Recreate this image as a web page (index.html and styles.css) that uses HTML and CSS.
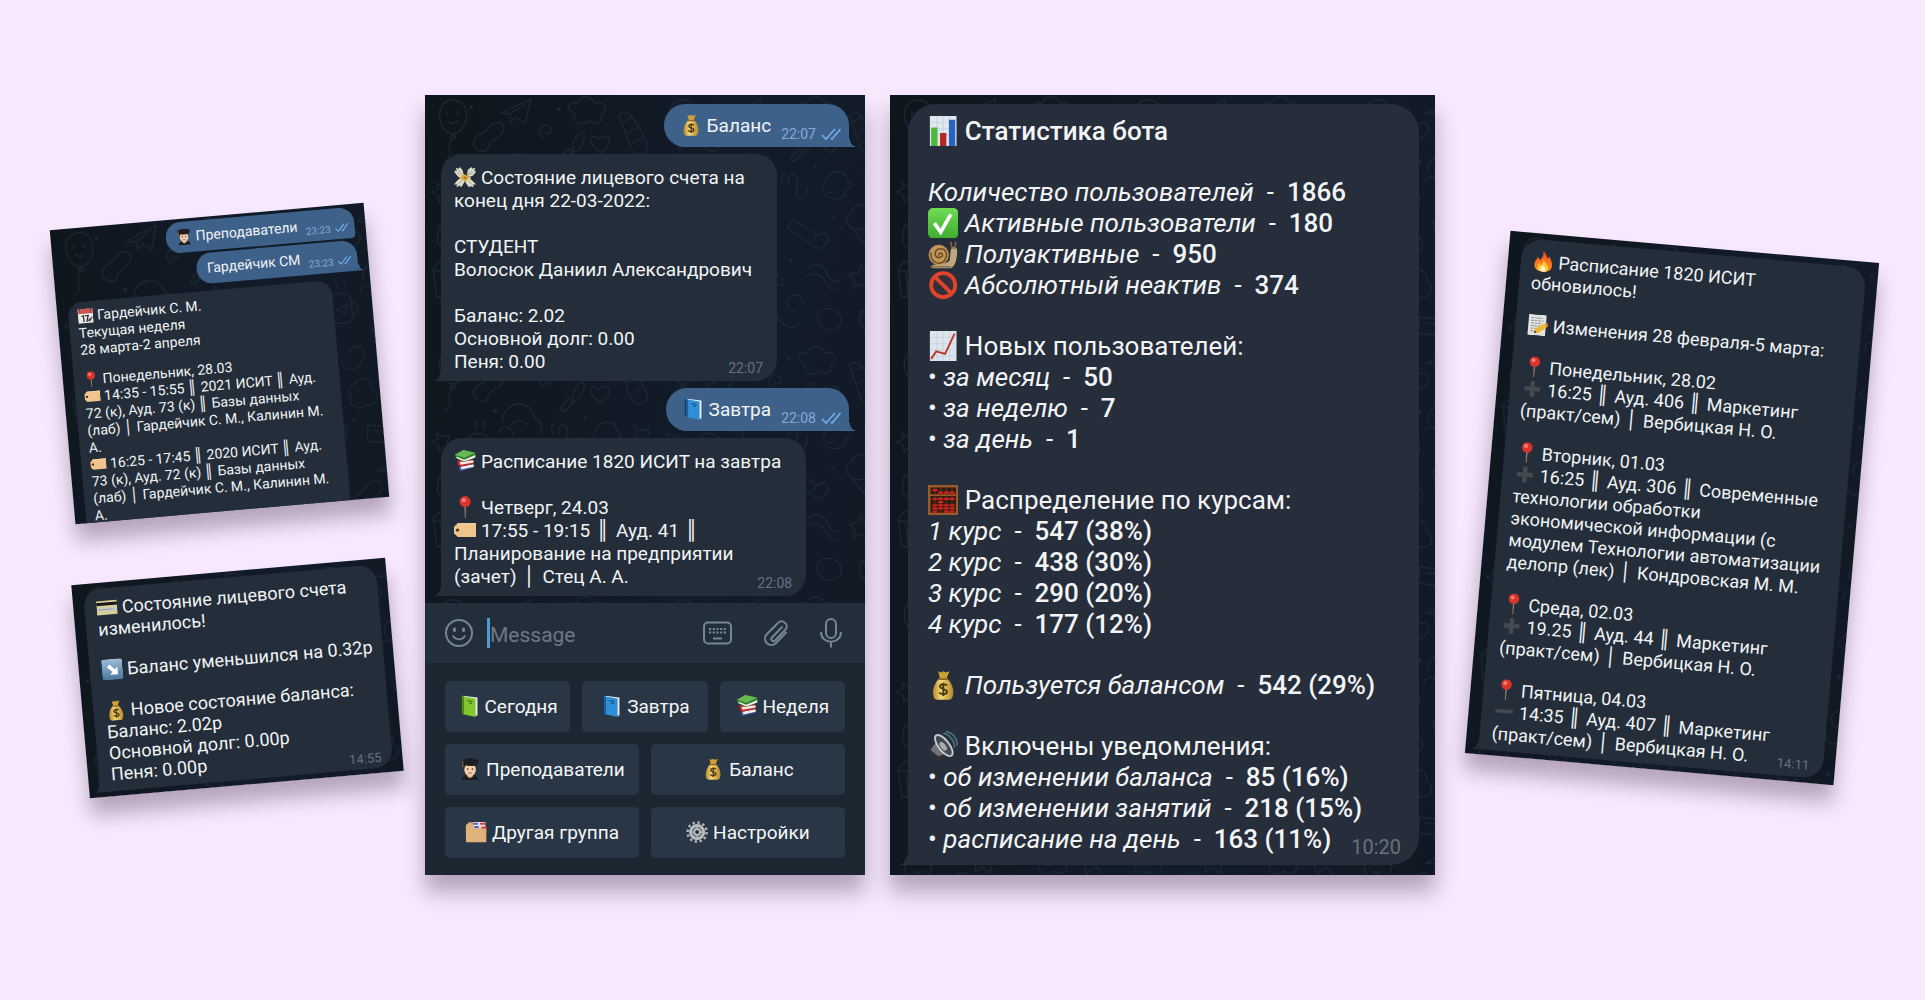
FILE: index.html
```html
<!DOCTYPE html>
<html lang="ru">
<head>
<meta charset="utf-8">
<meta name="viewport" content="width=device-width, initial-scale=1">
<title>Бот расписания</title>
<link rel="stylesheet" href="styles.css">
</head>
<body>
<svg class="defs" aria-hidden="true">
  <defs>
    <linearGradient id="g-gold" x1="0" x2="1"><stop offset="0" stop-color="#b98a26"/><stop offset=".4" stop-color="#f3d878"/><stop offset="1" stop-color="#b5852a"/></linearGradient>
    <linearGradient id="g-green" x1="0" y1="0" x2="0" y2="1"><stop offset="0" stop-color="#6fdc55"/><stop offset="1" stop-color="#3fae2c"/></linearGradient>
    <linearGradient id="g-blue" x1="0" y1="0" x2="0" y2="1"><stop offset="0" stop-color="#9cbcd8"/><stop offset="1" stop-color="#4a779f"/></linearGradient>
    <linearGradient id="g-fire" x1="0" y1="0" x2="0" y2="1"><stop offset="0" stop-color="#f0481e"/><stop offset="1" stop-color="#ff9a1f"/></linearGradient>
    <pattern id="doodle" width="230" height="250" patternUnits="userSpaceOnUse">
      <g fill="none" stroke="#1b2733" stroke-width="1.3" stroke-linecap="round" stroke-linejoin="round">
        <path d="M28 5c-20 0-16 32 0 34 16-2 20-34 0-34zM28 39l-3 4h6zM28 43c-10 10 4 14-8 24M22 17v3M33 17v3M23 26q5 5 9 0"/>
        <path d="M76 18l30-14-6 24-9-6-5 5-1-8zM85 19l15-10"/>
        <path d="M150 18c-10-2-8-12 2-10 3-8 14-8 18 0 10-2 14 8 6 12 4 8-8 10-12 6-6 6-18 2-14-8z"/>
        <path d="M194 20c8-8 14 0 28 28 4 10-10 16-16 6zM197 28l10-6M202 38l12-6M207 48l12-6"/>
        <path d="M66 30c14-8 18 8 4 14-10 4-4 14-14 12-12-2-8-16 2-18z"/>
        <path d="M120 42a6 6 0 1 1 6-6 3 3 0 0 1-6 0"/>
        <path d="M148 48c8-16 16-14 8 4l-8 6zM148 58c-4 2-6 10-12 8 0-8 6-10 8-12z"/>
        <path d="M174 44c-8-8-14 4 2 14 14-10 8-22-2-14z"/>
        <path d="M78 76a16 16 0 0 1 32-2 8 8 0 0 1 4 14M84 84a10 10 0 0 1 18-4M74 88c4-10 14-6 14 4"/>
        <path d="M12 88l6 4 7-2-3 7 4 6-7-1-5 5-1-7-7-3 7-3z"/>
        <path d="M44 94c0-8 20-8 20 2v18c0 6-20 6-20 0zM64 98c8 0 8 12 0 12M50 84q4-4 0-8M58 84q4-4 0-8M48 104l12-5-3 11-4-4z"/>
        <path d="M134 90c-4-14 12-14 8 2s12 16 10 0M130 78q-6 4-2 10"/>
        <path d="M172 82c8-8 20-6 20 4 6 0 4 8-2 8v6c-10 8-24 2-22-8zM184 88v1M170 96q6 4 10 0"/>
        <path d="M212 92a7 8 0 1 0 10 0c4-4 2-8-5-7-7-1-9 3-5 7zM209 80l1 3M224 80l-1 3"/>
        <path d="M14 132c16-14 28-4 20 14-4 10-18 10-22 0zM20 130l3-9 5 8M18 140v1M24 143v1M29 137v1"/>
        <path d="M82 126h34l-14 36c-2 4-6 4-8 0zM86 134l26 4M88 144l18 3M90 124c0-10 18-10 20 0"/>
        <path d="M138 124l24 16-6 9-24-16zM162 140l8-2 4 7-8 9-8-3M176 126l4-5M182 134l7-2"/>
        <path d="M196 118a12 12 0 1 1 20 12l-6 20-14-18c-6-4-6-12 0-14zM196 132c6 4 12 4 20-2"/>
        <path d="M58 148c8-14 22 0 10 10-2 12-22 8-18-4M58 152v1"/>
        <path d="M8 174c8-12 20-12 28 0l-4 28H12zM16 178l2 24M28 178l-2 24M8 176h28"/>
        <path d="M60 180c6-10 20-4 16 6 10 4 6 18-6 16-10 6-20-4-14-12-4-4 0-10 4-10z"/>
        <path d="M100 190a14 14 0 0 1 28 0zM114 190v18q3 6 6 0M106 190q2-8 8-14 6 6 8 14"/>
        <path d="M152 174q14-10 20 4t14 6M150 182q14-8 20 4t12 8"/>
        <path d="M206 170l4 8 9 1-7 6 2 9-8-5-8 5 2-9-6-6 9-1z"/>
        <path d="M140 216a8 8 0 1 1 8-8M22 226c0-10 16-10 16 0s-16 10-16 0zM38 226l10-6v12z"/>
        <path d="M70 222l30 4-2 16-30-4zM76 228l16 2M112 228q8-10 16 0t16 0M164 216c14-8 28 4 20 16-14 8-26-2-20-16z"/>
        <path d="M206 216c12 0 18 8 14 20-10 2-18-6-14-20zM206 216q8 6 14 20"/>
      </g>
      <g fill="#1b2733"><circle cx="46" cy="12" r="2"/><circle cx="134" cy="14" r="2"/><circle cx="70" cy="66" r="2"/><circle cx="160" cy="72" r="2"/><circle cx="104" cy="108" r="2"/><circle cx="42" cy="160" r="2"/><circle cx="136" cy="166" r="2"/><circle cx="220" cy="204" r="2"/><circle cx="56" cy="216" r="2"/></g>
    </pattern>
  </defs>

  <symbol id="bag" viewBox="0 0 24 24"><path d="M8 1l2 1 2-1 2 1 3-1-2.500 6h-5z" fill="#d0a036"/><path d="M9 6.500h6c3 3 5 7 5 11 0 4-1.500 5.500-3 6H7c-2-.5-3-2-3-6 0-4 2-8 5-11z" fill="url(#g-gold)"/><path d="M8.500 7.200h7" stroke="#8d641a" stroke-width="1.400"/><path d="M15 12.200c-1-1.400-5.500-1.500-5.500.9 0 2.500 5.500 1.400 5.500 4 0 2.400-4.800 2.400-6 .6M12.100 10v10.500" fill="none" stroke="#4b3a12" stroke-width="1.500"/></symbol>
  <symbol id="wings" viewBox="0 0 24 24"><path d="M11 11L9 4 6 1 5 3 2 2l1 3-3 0 2 4 3 3 5 2zM14 10l1-6 4-3 1 2 3-1-1 3 2 1-3 4-4 2zM9 12l-5 3-4 5 3 0 0 3 3-2 2 2 4-7zM14 13l5 2 5 5-3 0 0 3-3-1-2 1-4-6z" fill="#dcdccb"/><path d="M4 4l6 6M3 7l6 4M20 4l-5 5M21 7l-6 3M3 21l6-6M21 21l-6-5" stroke="#92958a" stroke-width=".8"/><path d="M6 7l12.500 6-2 5L4.500 12z" fill="#d3d1a9"/><path d="M10 8.500l6 3-3 5.500-6-3z" fill="#e4ad35"/><path d="M10.500 12l3 1.500" stroke="#79591c" stroke-width="1.300"/></symbol>
  <symbol id="book-blue" viewBox="0 0 24 24"><path d="M3 1.500l3-1v20l-3-1z" fill="#123c60"/><path d="M5 .8l16 2v19.500L5 20z" fill="#eceff2"/><path d="M4.500 1.300l14.500 2.500v20L4.500 20.500z" fill="#2f8ed6"/><path d="M4.500 1.300v19.200l2 .5V1.600z" fill="#1c5c93"/><path d="M10 6l6 1M12 8.500l3 .5" stroke="#155085" stroke-width="1.200"/></symbol>
  <symbol id="book-green" viewBox="0 0 24 24"><path d="M3 1.500l3-1v20l-3-1z" fill="#2e4f0d"/><path d="M5 .8l16 2v19.500L5 20z" fill="#eceff2"/><path d="M4.500 1.300l14.500 2.500v20L4.500 20.500z" fill="#83c62f"/><path d="M4.500 1.300v19.200l2 .5V1.600z" fill="#4d8118"/><path d="M10 6l6 1M12 8.500l3 .5" stroke="#42700f" stroke-width="1.200"/></symbol>
  <symbol id="books" viewBox="0 0 24 24"><path d="M6 17l14-2 2 4-15 4-2-2z" fill="#3b4c98"/><path d="M7 18l14-2.500.5 2.500L8 21z" fill="#eee"/><path d="M4 11l16-1 1 5-14 3-3-2z" fill="#c92828"/><path d="M6 13l15-2 .3 2.500L7 16z" fill="#f1e9e9"/><path d="M1 5l9-5 13 3v5l-12 5L2 9z" fill="#2f7e28"/><path d="M1 5l9-5 13 3-12 5.500z" fill="#67b951"/><path d="M2.500 7L11 10.500 23 5.500V8l-12 4.500L3 9z" fill="#ececec"/></symbol>
  <symbol id="pin" viewBox="0 0 24 24"><path d="M11.200 10h1.700l-.3 14h-.9z" fill="#9b8072"/><circle cx="12" cy="6" r="6" fill="#d9342c"/><circle cx="10.500" cy="4.500" r="2.300" fill="#f47d72"/></symbol>
  <symbol id="tag" viewBox="0 0 24 24"><path d="M4 4.500h20v15H4l-4-4v-7z" fill="#efc48d"/><path d="M4 4.500h20v1.200H4z" fill="#f8dcae"/><circle cx="3.800" cy="12" r="1.800" fill="#4d3625"/></symbol>
  <symbol id="student" viewBox="0 0 24 24"><path d="M3 24c1-5 5-6 9-6s8 1 9 6z" fill="#1c1c20"/><path d="M9 17h6v3l-3 2-3-2z" fill="#dfb18c"/><ellipse cx="12" cy="12.500" rx="6.300" ry="7" fill="#f3cda8"/><path d="M5 12c-1-6 2-8 7-8s8 2 7 8l-1-4c-3 1-8 1-11-1z" fill="#38251a"/><path d="M3 2l9-2 9 2v4l-4 2H7L3 6z" fill="#1e1e22"/><path d="M4 3v7" stroke="#98702d" stroke-width="1"/><circle cx="9.500" cy="12" r=".9" fill="#333"/><circle cx="14.500" cy="12" r=".9" fill="#333"/><path d="M10 16q2 1.200 4 0" stroke="#a25b4c" fill="none"/></symbol>
  <symbol id="dividers" viewBox="0 0 24 24"><path d="M1 4l4-3h5l1 3 11 1 1 2v5H1z" fill="#b98a56"/><path d="M9 1h13v7H9z" fill="#e8e4ea"/><path d="M9 2h5v2H9z" fill="#5268c4"/><path d="M16 2h6v2h-6z" fill="#d33d36"/><path d="M1 5l4-3.500L9 4v4l14 1v14H1z" fill="#e0b27b"/><path d="M10 5.500h5v2h-5z" fill="#5268c4"/><path d="M17 6h6v2h-5z" fill="#d33d36"/></symbol>
  <symbol id="gear" viewBox="0 0 24 24"><circle cx="12" cy="12" r="10.300" fill="none" stroke="#aeb2b5" stroke-width="2.800" stroke-dasharray="2.600 2.790"/><circle cx="12" cy="12" r="7.200" fill="#6d7275" stroke="#b9bdc0" stroke-width="3"/><circle cx="12" cy="12" r="3" fill="#2a3746" stroke="#c9cccf" stroke-width="1.600"/><path d="M12 5v4M12 15v4M5 12h4M15 12h4" stroke="#b9bdc0" stroke-width="1.300"/></symbol>
  <symbol id="bars" viewBox="0 0 24 24"><path d="M1.500 0h21v24h-21z" fill="#dde8f0"/><path d="M1.500 5h21M1.500 10h21M1.500 15h21M7 0v24M12 0v24M17 0v24" stroke="#bccbd6" stroke-width=".5"/><path d="M2.500 9h5v15h-5z" fill="#4fb83c"/><path d="M9.500 13.500h5V24h-5z" fill="#b52620"/><path d="M16.500 3h5v21h-5z" fill="#2a62c4"/></symbol>
  <symbol id="check" viewBox="0 0 24 24"><rect width="24" height="24" rx="4" fill="url(#g-green)"/><path d="M5 12l5 7 8-14" fill="none" stroke="#fff" stroke-width="3"/></symbol>
  <symbol id="snail" viewBox="0 0 24 24"><path d="M2 22c4-4 12-1 15-5l1-9c1-3 5-2 5 1 0 6-1 12-5 14H4z" fill="#bda87c"/><path d="M19 8l-1-6M21 8l1-6" stroke="#7a6440" stroke-width="1.300"/><circle cx="8.500" cy="12.500" r="8" fill="#c3965a"/><path d="M8.500 13a1.500 1.500 0 1 1 2 1c-3 2-6-1-4.500-4s6.500-3 8 0 0 8-4 9-9-3-7.500-8.500" fill="none" stroke="#704a22" stroke-width="1.200"/><path d="M2 22h16" stroke="#7c6440"/></symbol>
  <symbol id="ban" viewBox="0 0 24 24"><circle cx="12" cy="12" r="9.500" fill="#343039" stroke="#e0452c" stroke-width="3"/><path d="M5.500 5.500l13 13" stroke="#e0452c" stroke-width="3"/></symbol>
  <symbol id="trend" viewBox="0 0 24 24"><path d="M1.500 0h21v24h-21z" fill="#dde5ec"/><path d="M1.500 5h21M1.500 10h21M1.500 15h21M1.500 20h21M7 0v24M12 0v24M17 0v24" stroke="#bccbd6" stroke-width=".5"/><path d="M2.500 22l4-6 7 2 7.500-16" fill="none" stroke="#c3332b" stroke-width="1.500"/></symbol>
  <symbol id="abacus" viewBox="0 0 24 24"><path d="M1 1h22v22H1z" fill="#2d1b14" stroke="#9a5a2a" stroke-width="2"/><path d="M1 8h22" stroke="#9a5a2a" stroke-width="1.300"/><path d="M5.500 2v20M10 2v20M14.500 2v20M19 2v20" stroke="#7d3a1c" stroke-width=".7"/><path d="M3.500 4h4M8 6h4M12.500 6h4M17 6h4M3.500 11h4M3.500 16h4M3.500 18.500h4M3.500 21h4M8 11h4M8 13.500h4M8 16h4M8 18.500h4M12.500 11h4M12.500 16h4M12.500 18.500h4M12.500 21h4M17 11h4M17 16h4M17 18.500h4M17 21h4" stroke="#cf2320" stroke-width="1.700"/></symbol>
  <symbol id="speaker" viewBox="0 0 24 24"><path d="M1 15l5-5 8 9-4 5-7-2z" fill="#2e2f33"/><path d="M2 15l6-9 9 11-9 3z" fill="#6f7277"/><ellipse cx="12.500" cy="11.500" rx="4.200" ry="10" transform="rotate(-38 12.500 11.500)" fill="#44474d" stroke="#c4c7cb" stroke-width="1.500"/><ellipse cx="12" cy="12" rx="2" ry="4" transform="rotate(-38 12 12)" fill="#a8abb0"/><path d="M12 2c4 0 9 5 9 11M14 .5c5 0 9 5 9 11" fill="none" stroke="#527787" stroke-width="1.200"/></symbol>
  <symbol id="calendar" viewBox="0 0 24 24"><path d="M1 2h22v21H1z" fill="#ecebea"/><path d="M1 2h22v7H1z" fill="#c65552"/><path d="M4 0v4M20 0v4" stroke="#66282a" stroke-width="1.500"/><path d="M6 13l3-1v9M11 12h5l-3 9" fill="none" stroke="#2b2b2b" stroke-width="1.800"/><path d="M14 21l4-4 0 3 4-6" fill="none" stroke="#444" stroke-width="1.600"/></symbol>
  <symbol id="card" viewBox="0 0 24 24"><rect y="4" width="24" height="16" rx="1" fill="#d6cf95"/><path d="M0 6h24v3.500H0z" fill="#17171a"/><path d="M1 12h22v4H1z" fill="#c7c9cb"/><path d="M3 14h17" stroke="#888b90" stroke-dasharray="3 1"/></symbol>
  <symbol id="arrow" viewBox="0 0 24 24"><rect width="24" height="24" rx="3" fill="url(#g-blue)"/><path d="M6 9l3-3 6 6 3-3v9H9l3-3z" fill="#fff"/></symbol>
  <symbol id="fire" viewBox="0 0 24 24"><path d="M11 0c2 3 5 5 5 9l2-3c2 3 4 6 4 10 0 5-4 8-10 8S2 21 2 16c0-4 3-6 3-9l3 4c2-3 4-6 3-11z" fill="url(#g-fire)"/><path d="M12 9c0 4 6 6 6 10 0 3-2 5-6 5s-6-2-6-5c0-2 1-4 2-5l1 3c2-2 3-5 3-8z" fill="#ffc636"/><path d="M12 16c1 2 3 3 3 5s-1 3-3 3-3-1-3-3 2-3 3-5z" fill="#fff3c4"/></symbol>
  <symbol id="memo" viewBox="0 0 24 24"><path d="M1 0h20v24H1z" fill="#e2e3e2"/><path d="M4 4h13M4 7h14M4 10h12M4 13h12M4 16h7M4 19h6" stroke="#929593" stroke-width="1.200" stroke-dasharray="3 1"/><path d="M8 21l1-5L20 9l3 4-10 8z" fill="#eab92f"/><path d="M20 9l2-1 2 4-1 1z" fill="#d9706c"/><path d="M8 21l1-3 2 3z" fill="#333"/></symbol>
  <symbol id="plus" viewBox="0 0 24 24"><path d="M9.500 3h5v6.500H21v5h-6.500V21h-5v-6.500H3v-5h6.500z" fill="#454a4e"/></symbol>
  <symbol id="minus" viewBox="0 0 24 24"><path d="M2 9.500h20v4H2z" fill="#454a4e"/></symbol>
  <symbol id="read" viewBox="0 0 20 12"><path d="M1 7l4 4L14 1M10 10l1 1 8.500-10" fill="none" stroke="#6cb0ee" stroke-width="1.700"/></symbol>
</svg>

<main class="board">
  <section class="stack">
    <article class="shot shot-teacher">
      <svg class="wallpaper" aria-hidden="true"><rect width="100%" height="100%" fill="url(#doodle)"/></svg>
      <div class="msg out plain"><svg class="em"><use href="#student"/></svg> Преподаватели<time>23:23</time><svg class="read"><use href="#read"/></svg></div>
      <div class="msg out"><span>Гардейчик СМ</span><time>23:23</time><svg class="read"><use href="#read"/></svg></div>
      <div class="msg in plain">
        <p><span><svg class="em"><use href="#calendar"/></svg> Гардейчик С. М.</span><span>Текущая неделя</span><span>28 марта-2 апреля</span></p>
        <p><span><svg class="em"><use href="#pin"/></svg> Понедельник, 28.03</span><span><svg class="em"><use href="#tag"/></svg> 14:35 - 15:55 <i class="bar">║</i> 2021 ИСИТ <i class="bar">║</i> Ауд.</span><span>72 (к), Ауд. 73 (к) <i class="bar">║</i> Базы данных</span><span>(лаб) <i class="bar">│</i> Гардейчик С. М., Калинин М.</span><span>А.</span><span><svg class="em"><use href="#tag"/></svg> 16:25 - 17:45 <i class="bar">║</i> 2020 ИСИТ <i class="bar">║</i> Ауд.</span><span>73 (к), Ауд. 72 (к) <i class="bar">║</i> Базы данных</span><span>(лаб) <i class="bar">│</i> Гардейчик С. М., Калинин М.</span><span>А.</span></p>
      </div>
    </article>

    <article class="shot shot-account">
      <svg class="wallpaper" aria-hidden="true"><rect width="100%" height="100%" fill="url(#doodle)"/></svg>
      <div class="msg in">
        <p><span><svg class="em"><use href="#card"/></svg> Состояние лицевого счета</span><span>изменилось!</span></p>
        <p><span><svg class="em"><use href="#arrow"/></svg> Баланс уменьшился на 0.32р</span></p>
        <p><span><svg class="em"><use href="#bag"/></svg> Новое состояние баланса:</span><span>Баланс: 2.02р</span><span>Основной долг: 0.00р</span><span>Пеня: 0.00р</span></p>
        <time>14:55</time>
      </div>
    </article>
  </section>

  <article class="shot shot-phone">
    <div class="chat">
      <svg class="wallpaper" aria-hidden="true"><rect width="100%" height="100%" fill="url(#doodle)"/></svg>
      <div class="msg out"><svg class="em"><use href="#bag"/></svg> Баланс<time>22:07</time><svg class="read"><use href="#read"/></svg></div>
      <div class="msg in">
        <p><span><svg class="em"><use href="#wings"/></svg> Состояние лицевого счета на</span><span>конец дня 22-03-2022:</span></p>
        <p><span>СТУДЕНТ</span><span>Волосюк Даниил Александрович</span></p>
        <p><span>Баланс: 2.02</span><span>Основной долг: 0.00</span><span>Пеня: 0.00</span></p>
        <time>22:07</time>
      </div>
      <div class="msg out"><svg class="em"><use href="#book-blue"/></svg> Завтра<time>22:08</time><svg class="read"><use href="#read"/></svg></div>
      <div class="msg in">
        <p><span><svg class="em"><use href="#books"/></svg> Расписание 1820 ИСИТ на завтра</span></p>
        <p><span><svg class="em"><use href="#pin"/></svg> Четверг, 24.03</span><span><svg class="em"><use href="#tag"/></svg> 17:55 - 19:15 <i class="bar">║</i> Ауд. 41 <i class="bar">║</i></span><span>Планирование на предприятии</span><span>(зачет) <i class="bar">│</i> Стец А. А.</span></p>
        <time>22:08</time>
      </div>
    </div>
    <form class="composer">
      <button type="button" class="tool" aria-label="Emoji"><svg width="28" height="28" viewBox="0 0 28 28"><circle cx="14" cy="14" r="13"/><path d="M8 16.500c2 5 10 5 12 0"/><path d="M9.500 10v1.500M18.500 10v1.500" stroke-width="3" stroke-linecap="round"/></svg></button>
      <input type="text" class="field" placeholder="Message" aria-label="Message">
      <button type="button" class="tool" aria-label="Keyboard"><svg width="29" height="28" viewBox="0 0 29 28"><rect x="1" y="3.500" width="27" height="21" rx="4"/><path d="M6 10h17M6 13.500h17" stroke-width="2.200" stroke-dasharray="2.200 1.500"/><path d="M10 19.500h9"/></svg></button>
      <button type="button" class="tool" aria-label="Attach"><svg width="24" height="28" viewBox="0 0 24 28"><path d="M18 8L8 18.500c-2 2 1 5 3 3L21.500 10.500c4-5-3-11-7.500-6.500L3 15c-6 6.500 3 15 9 9L22 13.500" stroke-linecap="round"/></svg></button>
      <button type="button" class="tool" aria-label="Voice"><svg width="22" height="30" viewBox="0 0 22 30"><rect x="6" y="1" width="10" height="19" rx="5"/><path d="M1 14c0 13 20 13 20 0M11 24v5.500"/></svg></button>
    </form>
    <div class="keys">
      <div class="keyrow"><button type="button"><svg class="em"><use href="#book-green"/></svg> Сегодня</button><button type="button"><svg class="em"><use href="#book-blue"/></svg> Завтра</button><button type="button"><svg class="em"><use href="#books"/></svg> Неделя</button></div>
      <div class="keyrow"><button type="button"><svg class="em"><use href="#student"/></svg> Преподаватели</button><button type="button"><svg class="em"><use href="#bag"/></svg> Баланс</button></div>
      <div class="keyrow"><button type="button"><svg class="em"><use href="#dividers"/></svg> Другая группа</button><button type="button"><svg class="em"><use href="#gear"/></svg> Настройки</button></div>
    </div>
  </article>

  <article class="shot shot-stats">
    <svg class="wallpaper" aria-hidden="true"><rect width="100%" height="100%" fill="url(#doodle)"/></svg>
    <div class="msg in">
      <p><span><svg class="em"><use href="#bars"/></svg> <b>Статистика бота</b></span></p>
      <p><span><em>Количество пользователей</em>  -  <b>1866</b></span><span><svg class="em"><use href="#check"/></svg> <em>Активные пользователи</em>  -  <b>180</b></span><span><svg class="em"><use href="#snail"/></svg> <em>Полуактивные</em>  -  <b>950</b></span><span><svg class="em"><use href="#ban"/></svg> <em>Абсолютный неактив</em>  -  <b>374</b></span></p>
      <p><span><svg class="em"><use href="#trend"/></svg> Новых пользователей:</span><span>• <em>за месяц</em>  -  <b>50</b></span><span>• <em>за неделю</em>  -  <b>7</b></span><span>• <em>за день</em>  -  <b>1</b></span></p>
      <p><span><svg class="em"><use href="#abacus"/></svg> Распределение по курсам:</span><span><em>1 курс</em>  -  <b>547 (38%)</b></span><span><em>2 курс</em>  -  <b>438 (30%)</b></span><span><em>3 курс</em>  -  <b>290 (20%)</b></span><span><em>4 курс</em>  -  <b>177 (12%)</b></span></p>
      <p><span><svg class="em"><use href="#bag"/></svg> <em>Пользуется балансом</em>  -  <b>542 (29%)</b></span></p>
      <p><span><svg class="em"><use href="#speaker"/></svg> Включены уведомления:</span><span>• <em>об изменении баланса</em>  -  <b>85 (16%)</b></span><span>• <em>об изменении занятий</em>  -  <b>218 (15%)</b></span><span>• <em>расписание на день</em>  -  <b>163 (11%)</b></span></p>
      <time>10:20</time>
    </div>
  </article>

  <article class="shot shot-update">
    <svg class="wallpaper" aria-hidden="true"><rect width="100%" height="100%" fill="url(#doodle)"/></svg>
    <div class="msg in">
      <p><span><svg class="em"><use href="#fire"/></svg> Расписание 1820 ИСИТ</span><span>обновилось!</span></p>
      <p><span><svg class="em"><use href="#memo"/></svg> Изменения 28 февраля-5 марта:</span></p>
      <p><span><svg class="em"><use href="#pin"/></svg> Понедельник, 28.02</span><span><svg class="em"><use href="#plus"/></svg> 16:25 <i class="bar">║</i> Ауд. 406 <i class="bar">║</i> Маркетинг</span><span>(практ/сем) <i class="bar">│</i> Вербицкая Н. О.</span></p>
      <p><span><svg class="em"><use href="#pin"/></svg> Вторник, 01.03</span><span><svg class="em"><use href="#plus"/></svg> 16:25 <i class="bar">║</i> Ауд. 306 <i class="bar">║</i> Современные</span><span>технологии обработки</span><span>экономической информации (с</span><span>модулем Технологии автоматизации</span><span>делопр (лек) <i class="bar">│</i> Кондровская М. М.</span></p>
      <p><span><svg class="em"><use href="#pin"/></svg> Среда, 02.03</span><span><svg class="em"><use href="#plus"/></svg> 19.25 <i class="bar">║</i> Ауд. 44 <i class="bar">║</i> Маркетинг</span><span>(практ/сем) <i class="bar">│</i> Вербицкая Н. О.</span></p>
      <p><span><svg class="em"><use href="#pin"/></svg> Пятница, 04.03</span><span><svg class="em"><use href="#minus"/></svg> 14:35 <i class="bar">║</i> Ауд. 407 <i class="bar">║</i> Маркетинг</span><span>(практ/сем) <i class="bar">│</i> Вербицкая Н. О.</span></p>
      <time>14:11</time>
    </div>
  </article>
</main>
</body>
</html>
```
FILE: styles.css
```css
* { box-sizing: border-box; }

body {
  margin: 0;
  background: #f7e8fe;
  color: #f2f4f6;
  font-family: Roboto, "Noto Sans", "DejaVu Sans", sans-serif;
}

.defs { position: absolute; width: 0; height: 0; }

.board {
  display: grid;
  grid-template-columns: minmax(0, 338fr) minmax(0, 440fr) minmax(0, 545fr) minmax(0, 397fr);
  column-gap: 25px;
  align-items: center;
  min-height: 100vh;
  padding: 0 68px 30px 62px;
}

/* Screenshot cards */
.shot {
  position: relative;
  display: flex;
  flex-direction: column;
  background: linear-gradient(100deg, #0e161d, #121b29 60%, #101923);
  box-shadow: 0 17px 20px rgba(30, 10, 35, .3);
}
.wallpaper { position: absolute; inset: 0; width: 100%; height: 100%; }

.stack {
  display: flex;
  flex-direction: column;
  gap: 60px;
  margin-top: 30px;
  padding-right: 5px;
}
.stack .shot { width: calc(100% - 18px); transform: rotate(-5deg); }

/* Message bubbles */
.msg {
  --fill: #232e3a;
  position: relative;
  border-radius: var(--round);
  background: var(--fill);
}
.msg p { margin: 0; }
.msg p + p { margin-top: var(--blank); }
.msg p > span { display: block; white-space: pre; }
.msg::after {
  content: "";
  position: absolute;
  bottom: 0;
  width: var(--tail);
  height: 12px;
}
.msg.in { align-self: flex-start; border-bottom-left-radius: 0; }
.msg.in::after {
  right: 100%;
  background: radial-gradient(ellipse var(--tail) 12px at 0 0, transparent 98%, var(--fill) 100%);
}
.msg.in time { position: absolute; color: #66727e; }
.msg.out {
  --fill: #3e618a;
  display: flex;
  align-items: center;
  align-self: flex-end;
  border-bottom-right-radius: 0;
  white-space: pre;
}
.msg.out::after {
  left: 100%;
  background: radial-gradient(ellipse var(--tail) 12px at 100% 0, transparent 98%, var(--fill) 100%);
}
.msg.out time { align-self: flex-end; color: #82abd6; }
.msg.plain::after { display: none; }

.em {
  flex: none;
  width: 1.17em;
  height: 1.17em;
  margin: -0.23em 0;
  vertical-align: baseline;
}
.bar { margin: 0 2px 0 1px; font-style: normal; }
b { font-weight: 500; }

/* Teacher timetable */
.shot-teacher {
  --round: 15px;
  --blank: 13px;
  --tail: 6px;
  height: 295px;
  padding: 3px 11px 0;
  font-size: 14px;
  line-height: 17px;
}
.shot-teacher .bar { margin: 0 1px 0 0; }
.shot-teacher .out { height: 31px; margin-bottom: 2px; padding: 0 6px 0 10px; }
.shot-teacher .out.plain { border-bottom-right-radius: 4px; }
.shot-teacher .out time { margin: 0 4px 2px 8px; font-size: 10px; }
.shot-teacher .out .read { width: 14px; height: 9px; margin: 0 0 7px; align-self: flex-end; }
.shot-teacher .in { flex: 1; min-height: 0; width: 265px; margin-top: 5px; padding: 6px 9px 0; border-bottom-right-radius: 0; overflow: hidden; }

/* Account change */
.shot-account {
  --round: 18px;
  --blank: 20px;
  --tail: 6px;
  align-self: flex-end;
  padding: 6px 10px 5px 11px;
  font-size: 18px;
  line-height: 21px;
}
.shot-account .in { align-self: stretch; padding: 9px 12px 7px; }
.shot-account .in time { right: 11px; bottom: 0; font-size: 13px; }

/* Phone screen */
.shot-phone {
  --round: 21px;
  --blank: 23px;
  --tail: 8px;
  font-size: 19px;
  line-height: 23px;
}
.shot-phone .bar { margin: 0 3px 0 2px; }
.chat {
  position: relative;
  display: flex;
  flex-direction: column;
  gap: 7px;
  padding: 9px 16px 7px;
}
.chat .in { padding: 12px 25px 8px 13px; }
.chat .in time { right: 14px; bottom: 1px; font-size: 14px; }
.chat .out { height: 43px; padding: 0 8px 0 16px; }
.chat .out time { margin: 0 5px 1px 10px; font-size: 14px; }
.chat .out .read { width: 20px; height: 12px; margin-bottom: 7px; align-self: flex-end; }

.composer {
  display: flex;
  align-items: center;
  height: 60px;
  padding: 0 23px 0 20px;
  background: #232e3b;
  position: relative;
}
.tool { display: flex; padding: 0; border: 0; background: none; }
.tool svg { fill: none; stroke: #758593; stroke-width: 2; }
.tool + .tool { margin-left: 32px; }
.field {
  flex: 1;
  min-width: 0;
  height: 30px;
  margin: 0 16px 0 14px;
  padding: 3px 0 0;
  border: 0;
  border-left: 3px solid #519bd5;
  background: none;
  color: #fff;
  font: 21px/27px Roboto, sans-serif;
}
.field::placeholder { color: #6c7883; opacity: 1; }

.keys {
  display: flex;
  flex-direction: column;
  gap: 12px;
  padding: 18px 20px 17px;
  background: #1d2731;
  position: relative;
}
.keyrow { display: grid; grid-auto-flow: column; grid-auto-columns: minmax(0, 1fr); gap: 12px; }
.keyrow button {
  height: 51px;
  padding: 0;
  border: 0;
  border-radius: 5px;
  background: #293646;
  color: #f4f6f8;
  font: inherit;
  white-space: pre;
}

/* Statistics */
.shot-stats {
  --round: 28px;
  --blank: 30px;
  --tail: 10px;
  padding: 9px 16px 10px 18px;
  font-size: 26px;
  line-height: 31px;
}
.shot-stats .in { --fill: #272e3b; align-self: stretch; padding: 12px 18px 10px 20px; }
.shot-stats .in time { right: 18px; bottom: 2px; font-size: 20px; }

/* Timetable update */
.shot-update {
  --round: 20px;
  --blank: 20px;
  --tail: 7px;
  margin: 45px 0 0 27px;
  padding: 6px 12px 5px 13px;
  font-size: 18px;
  line-height: 22px;
  transform: rotate(5deg);
}
.shot-update .in { align-self: stretch; padding: 11px 12px 6px; }
.shot-update .in time { right: 14px; bottom: 1px; font-size: 13px; }
```
